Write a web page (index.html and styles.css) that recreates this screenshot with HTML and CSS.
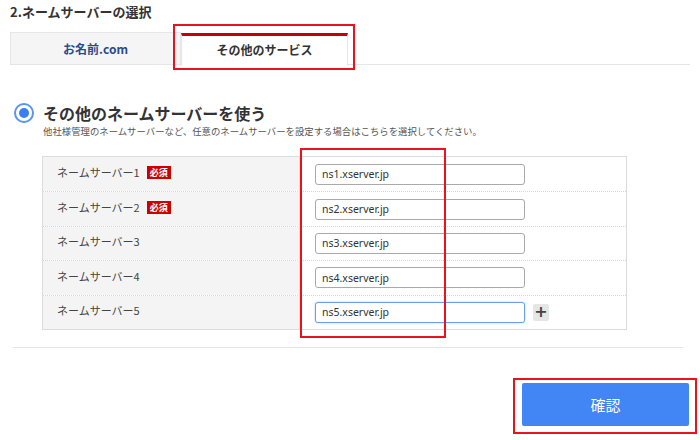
FILE: index.html
```html
<!DOCTYPE html>
<html lang="ja">
<head>
<meta charset="utf-8">
<link rel="stylesheet" href="styles.css">
</head>
<body>
<div class="page">
  <h2 class="title">2.ネームサーバーの選択</h2>
  <div class="tabs">
    <div class="tab tab-onamae">お名前.com</div>
    <div class="tab tab-other">その他のサービス</div>
    <div class="tab-fill"></div>
  </div>

  <div class="section">
    <div class="radio-row">
      <span class="radio"><span class="radio-dot"></span></span>
      <span class="radio-label">その他のネームサーバーを使う</span>
    </div>
    <p class="desc">他社様管理のネームサーバーなど、任意のネームサーバーを設定する場合はこちらを選択してください。</p>

    <div class="ns-table">
      <div class="ns-row">
        <div class="ns-label">ネームサーバー1<span class="req">必須</span></div>
        <div class="ns-field"><input class="ns-input" type="text" value="ns1.xserver.jp"></div>
      </div>
      <div class="ns-row">
        <div class="ns-label">ネームサーバー2<span class="req">必須</span></div>
        <div class="ns-field"><input class="ns-input" type="text" value="ns2.xserver.jp"></div>
      </div>
      <div class="ns-row">
        <div class="ns-label">ネームサーバー3</div>
        <div class="ns-field"><input class="ns-input" type="text" value="ns3.xserver.jp"></div>
      </div>
      <div class="ns-row">
        <div class="ns-label">ネームサーバー4</div>
        <div class="ns-field"><input class="ns-input" type="text" value="ns4.xserver.jp"></div>
      </div>
      <div class="ns-row">
        <div class="ns-label">ネームサーバー5</div>
        <div class="ns-field"><input class="ns-input focus" type="text" value="ns5.xserver.jp"><span class="plus">+</span></div>
      </div>
    </div>
  </div>

  <hr class="sep">

  <div class="actions">
    <button class="confirm" type="button">確認</button>
  </div>
</div>

<div class="mark mark-tab"></div>
<div class="mark mark-inputs"></div>
<div class="mark mark-button"></div>
</body>
</html>
```

FILE: styles.css
```css
* { box-sizing: border-box; }
html, body { margin: 0; padding: 0; background: #fff; }
body {
  width: 700px;
  height: 440px;
  overflow: hidden;
  position: relative;
  font-family: "Noto Sans CJK JP", "Noto Sans", sans-serif;
  color: #333;
}
.page { padding: 0; }
.title {
  margin: 4px 0 0 10px;
  font-size: 13px;
  line-height: 16px;
  font-weight: bold;
  color: #333;
}
.tabs {
  display: flex;
  align-items: flex-start;
  margin: 12px 10px 0 10px;
  height: 34px;
}
.tab {
  display: flex;
  align-items: center;
  justify-content: center;
  font-size: 12px;
  font-weight: bold;
}
.tab-onamae {
  width: 171px;
  height: 33px;
  background: #f5f5f5;
  border: 1px solid #e6e6e6;
  color: #2b4a8b;
}
.tab-other {
  width: 167px;
  height: 33px;
  margin-top: 1px;
  background: #fff;
  border-top: 3px solid #c40000;
  border-left: 1px solid #e6e6e6;
  border-right: 1px solid #e6e6e6;
  color: #333;
  padding-bottom: 3px;
}
.tab-fill {
  flex: 1;
  height: 33px;
  border-bottom: 1px solid #e6e6e6;
}
.section {
  margin: 36px 0 0 14px;
}
.radio-row {
  display: flex;
  align-items: center;
  gap: 9px;
  height: 22px;
}
.radio {
  width: 20px;
  height: 20px;
  border-radius: 50%;
  border: 2px solid #5b93ee;
  display: flex;
  align-items: center;
  justify-content: center;
  background: #fff;
}
.radio-dot {
  width: 10px;
  height: 10px;
  border-radius: 50%;
  background: #3d7fee;
}
.radio-label {
  font-size: 16px;
  font-weight: bold;
  color: #333;
  line-height: 22px;
}
.desc {
  margin: 0 0 0 29px;
  font-size: 9.4px;
  line-height: 14px;
  color: #555;
}
.ns-table {
  margin: 18px 0 0 28px;
  width: 585px;
  border: 1px solid #dcdcdc;
}
.ns-row {
  display: flex;
  height: 34.4px;
  border-top: 1px dotted #d6d6d6;
}
.ns-row:first-child { border-top: none; }
.ns-label {
  width: 257px;
  background: #f4f4f4;
  border-right: 1px solid #dcdcdc;
  display: flex;
  align-items: center;
  padding-left: 14px;
  padding-bottom: 4px;
  font-size: 11px;
  color: #444;
}
.req {
  display: inline-block;
  margin-left: 7px;
  background: #cc0000;
  color: #fff;
  font-size: 9px;
  line-height: 13px;
  padding: 0 3px;
  font-weight: bold;
}
.ns-field {
  flex: 1;
  display: flex;
  align-items: center;
  padding-left: 15px;
  gap: 8px;
}
.ns-input {
  width: 210px;
  height: 21px;
  border: 1px solid #a9a9a9;
  border-radius: 3px;
  padding: 0 6px;
  font-family: "Noto Sans", "Noto Sans CJK JP", sans-serif;
  font-size: 10.5px;
  color: #333;
  background: #fff;
  outline: none;
}
.ns-input.focus {
  border-color: #6d9ef2;
  box-shadow: 0 0 2px #9ec0f7;
}
.plus {
  width: 16px;
  height: 17px;
  background: #e6e6e6;
  border-radius: 2px;
  display: flex;
  align-items: center;
  justify-content: center;
  font-family: "DejaVu Sans", sans-serif;
  font-size: 16px;
  font-weight: bold;
  color: #444;
  line-height: 1;
}
.sep {
  margin: 17px 17px 0 13px;
  border: none;
  border-top: 1px solid #e6e6e6;
  height: 0;
}
.actions {
  display: flex;
  justify-content: flex-end;
  margin: 35px 11px 0 0;
}
.confirm {
  width: 167px;
  height: 43px;
  border: none;
  border-radius: 2px;
  background: #4285f4;
  color: #fff;
  font-family: "Noto Sans CJK JP", sans-serif;
  font-size: 15px;
}
.mark {
  position: absolute;
  border: 2px solid #e8131b;
  pointer-events: none;
}
.mark-tab { left: 173px; top: 24px; width: 182px; height: 46px; }
.mark-inputs { left: 300px; top: 148px; width: 146px; height: 190px; }
.mark-button { left: 513px; top: 378px; width: 184px; height: 56px; }
```
